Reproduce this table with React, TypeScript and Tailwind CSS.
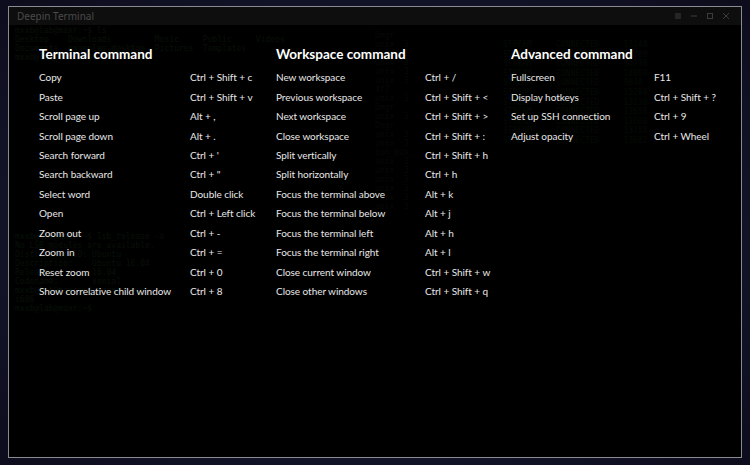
import React from "react";

const cols = [
  {
    title: "Terminal command",
    lw: "w-[151px]",
    cw: "w-[237px]",
    items: [
      ["Copy", "Ctrl + Shift + c"],
      ["Paste", "Ctrl + Shift + v"],
      ["Scroll page up", "Alt + ,"],
      ["Scroll page down", "Alt + ."],
      ["Search forward", "Ctrl + '"],
      ["Search backward", 'Ctrl + "'],
      ["Select word", "Double click"],
      ["Open", "Ctrl + Left click"],
      ["Zoom out", "Ctrl + -"],
      ["Zoom in", "Ctrl + ="],
      ["Reset zoom", "Ctrl + 0"],
      ["Show correlative child window", "Ctrl + 8"],
    ],
  },
  {
    title: "Workspace command",
    lw: "w-[149px]",
    cw: "w-[235px]",
    items: [
      ["New workspace", "Ctrl + /"],
      ["Previous workspace", "Ctrl + Shift + <"],
      ["Next workspace", "Ctrl + Shift + >"],
      ["Close workspace", "Ctrl + Shift + :"],
      ["Split vertically", "Ctrl + Shift + h"],
      ["Split horizontally", "Ctrl + h"],
      ["Focus the terminal above", "Alt + k"],
      ["Focus the terminal below", "Alt + j"],
      ["Focus the terminal left", "Alt + h"],
      ["Focus the terminal right", "Alt + l"],
      ["Close current window", "Ctrl + Shift + w"],
      ["Close other windows", "Ctrl + Shift + q"],
    ],
  },
  {
    title: "Advanced command",
    lw: "w-[143px]",
    cw: "w-[220px]",
    items: [
      ["Fullscreen", "F11"],
      ["Display hotkeys", "Ctrl + Shift + ?"],
      ["Set up SSH connection", "Ctrl + 9"],
      ["Adjust opacity", "Ctrl + Wheel"],
    ],
  },
];

const termTop = [
  "mxxb@lab@maxr:~$ ls",
  "Desktop    Downloads         Music     Public     Videos",
  "Documents  examples.desktop  Pictures  Templates",
  "mxxb@lab@maxr:~$ ",
];

const termBottom = [
  "mxxb@lab@maxr:~$ lsb_release -a",
  "No LSB modules are available.",
  "Distributor ID: Ubuntu",
  "Description:    Ubuntu 16.04",
  "Release:        16.04",
  "Codename:       xenial",
  "mxxb@lab@maxr:~$ uname -m",
  "i686",
  "mxxb@lab@maxr:~$ ",
];

const midLines = [
  "Dmgr", "unix  3", "unix  3", "unix  3", "unix  3", "unix  3", "4f7", "unix  3", "Dmgr",
  "unix  3", "Dmgr", "unix  3", "unix  3", "ion_bus_", "unix  3", "unix  3", "unix  3",
  "unix  3", "unix  3", "unix  3",
];

const rightLines = [
  "STREAM     CONNECTED     13148",
  "STREAM     CONNECTED     14789",
  "STREAM     CONNECTED     14798",
  "STREAM     CONNECTED     14069",
  "STREAM     CONNECTED     9848",
  "",
  "STREAM     CONNECTED     15288",
  "",
  "STREAM     CONNECTED     13138",
  "",
  "STREAM     CONNECTED     13658",
  "STREAM     CONNECTED     13660",
  "",
  "STREAM     CONNECTED     13758",
  "",
  "STREAM     CONNECTED     13602",
];

export default function App() {
  return (
    <div className="w-[750px] h-[465px] bg-[radial-gradient(ellipse_at_center,#2a2c44_0%,#14152a_60%,#0c0c1c_100%)] pl-[8px] pt-[6px] overflow-hidden">
      <div className="relative w-[734px] h-[452px] border border-[#8a8a92] bg-[#030303] flex flex-col overflow-hidden">
        {/* title bar */}
        <div className="h-[18px] bg-[#0e0e0e] flex items-center justify-between px-[8px] shrink-0">
          <span className="text-[10px] text-[#4a4a4a] font-['Noto_Sans',sans-serif]">Deepin Terminal</span>
          <div className="flex items-center gap-[8px] mr-[3px]">
            <svg width="8" height="8" viewBox="0 0 8 8"><path d="M1 2h6M1 4h6M1 6h6" stroke="#3c3c3c" strokeWidth="1" /></svg>
            <svg width="8" height="8" viewBox="0 0 8 8"><path d="M1 4h6" stroke="#3c3c3c" strokeWidth="1" /></svg>
            <svg width="8" height="8" viewBox="0 0 8 8"><rect x="1.5" y="1.5" width="5" height="5" fill="none" stroke="#3c3c3c" /></svg>
            <svg width="8" height="8" viewBox="0 0 8 8"><path d="M1 1l6 6M7 1l-6 6" stroke="#3c3c3c" strokeWidth="1" /></svg>
          </div>
        </div>
        {/* terminal content (dimmed) */}
        <div className="flex-1 font-['DejaVu_Sans_Mono',monospace] text-[8px] leading-[9px] text-[#1e3b1e] pl-[6px] pt-[1px] flex">
          <div className="w-[360px] flex flex-col">
            {termTop.map((l, i) => (
              <div key={i} className="whitespace-pre">{l}</div>
            ))}
            <div className="h-[170px]" />
            {termBottom.map((l, i) => (
              <div key={i} className="whitespace-pre">{l}</div>
            ))}
          </div>
          <div className="w-[128px] flex flex-col pt-[5px] text-[#1a1f1a]">
            {midLines.map((l, i) => (
              <div key={i} className="whitespace-pre">{l}</div>
            ))}
          </div>
          <div className="flex flex-col pt-[14px] text-[#132513] leading-[9.6px]">
            {rightLines.map((l, i) => (
              <div key={i} className="whitespace-pre">{l}</div>
            ))}
          </div>
        </div>
        {/* hotkeys overlay */}
        <div className="absolute inset-0 top-[18px] bg-[rgba(0,0,0,0.74)] font-['Lato',sans-serif] flex pl-[30px] pt-[19px]">
          {cols.map((c) => (
            <div key={c.title} className={`${c.cw} flex flex-col`}>
              <div className="text-[13.5px] font-bold text-white leading-[20px] h-[24px]">{c.title}</div>
              {c.items.map(([a, b]) => (
                <div key={a} className="flex h-[19.45px] items-center text-[10px] tracking-[-0.05px] text-[#e8e8e8]">
                  <span className={`${c.lw} shrink-0 whitespace-nowrap`}>{a}</span>
                  <span className="whitespace-nowrap">{b}</span>
                </div>
              ))}
            </div>
          ))}
        </div>
      </div>
    </div>
  );
}
